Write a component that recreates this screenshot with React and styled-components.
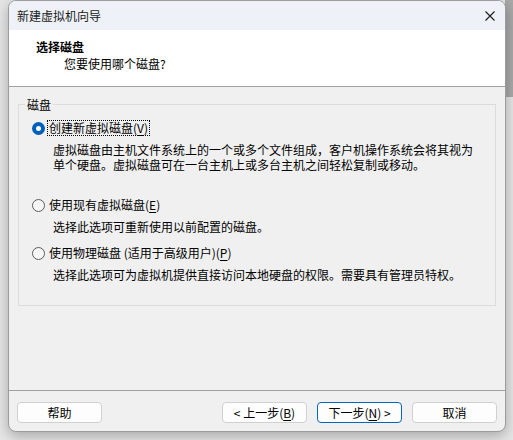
import React from "react";
import styled, { createGlobalStyle } from "styled-components";

const Global = createGlobalStyle`
  html, body { margin: 0; padding: 0; }
  body {
    width: 513px;
    height: 440px;
    overflow: hidden;
    background:
      linear-gradient(#a9a9a9, #a9a9a9) right top / 8px 97px no-repeat,
      #e6e6e6;
    font-family: "Noto Sans CJK SC", "Microsoft YaHei", "Noto Sans", sans-serif;
    font-size: 12px;
    color: #000;
  }
`;

const Window = styled.div`
  box-sizing: border-box;
  margin-left: 8px;
  width: 498px;
  border: 1px solid #9c9c9c;
  border-radius: 8px;
  overflow: hidden;
  background: #f0f0f0;
  box-shadow: 0 4px 14px rgba(0, 0, 0, 0.28);
  display: flex;
  flex-direction: column;
`;

const TitleBar = styled.div`
  height: 29px;
  background: #eef2f8;
  display: flex;
  align-items: center;
  justify-content: space-between;
  padding: 0 10px 0 8px;
`;

const TitleText = styled.span`
  font-size: 12px;
  line-height: 16px;
  color: #1a1a1a;
`;

const CloseBox = styled.span`
  display: flex;
  width: 10px;
  height: 10px;
`;

const Header = styled.div`
  height: 57px;
  box-sizing: border-box;
  background: #ffffff;
  border-bottom: 1px solid #a0a0a0;
  padding: 9px 0 0 27px;
  display: flex;
  flex-direction: column;
`;

const HeaderTitle = styled.div`
  font-weight: bold;
  line-height: 16px;
`;

const HeaderSub = styled.div`
  line-height: 16px;
  margin-top: 1px;
  padding-left: 28px;
`;

const Body = styled.div`
  height: 303px;
  box-sizing: border-box;
  padding-top: 10px;
`;

const Group = styled.fieldset`
  margin: 0 9px;
  padding: 0;
  border: 1px solid #dcdcdc;
  border-radius: 0;
  min-width: 0;
`;

const Legend = styled.legend`
  margin-left: 6px;
  padding: 0 2px;
  line-height: 15px;
`;

const GroupContent = styled.div`
  padding: 8px 0 23px 13px;
  display: flex;
  flex-direction: column;
`;

const Option = styled.div`
  margin-top: ${(p) => p.$top || 0}px;
  display: flex;
  flex-direction: column;
`;

const OptionRow = styled.div`
  display: flex;
  align-items: center;
  height: 16px;
`;

const Radio = styled.span`
  box-sizing: border-box;
  width: 13px;
  height: 13px;
  border-radius: 50%;
  flex: none;
  display: flex;
  align-items: center;
  justify-content: center;
  background: ${(p) => (p.$checked ? "#005fb8" : "#f6f6f6")};
  border: ${(p) => (p.$checked ? "none" : "1px solid #5c5c5c")};
  &::after {
    content: "";
    display: ${(p) => (p.$checked ? "block" : "none")};
    width: 5px;
    height: 5px;
    border-radius: 50%;
    background: #ffffff;
  }
`;

const Label = styled.span`
  margin-left: 2px;
  line-height: 14px;
  padding: 0 1px;
  border: 1px dotted ${(p) => (p.$focus ? "#000" : "transparent")};
  white-space: nowrap;
`;

const Desc = styled.div`
  margin: 6px 0 0 21px;
  line-height: 15px;
  white-space: nowrap;
`;

const Key = styled.span`
  text-decoration: underline;
  text-underline-offset: 2px;
`;

const Separator = styled.div`
  height: 1px;
  background: #a0a0a0;
`;

const Footer = styled.div`
  height: 40px;
  box-sizing: border-box;
  padding: 11px 8px 0 8px;
  display: flex;
  gap: 10px;
`;

const Spacer = styled.div`
  flex: 1;
`;

const Button = styled.button`
  box-sizing: border-box;
  width: 85px;
  height: 21px;
  padding: 0;
  margin: 0;
  background: #fdfdfd;
  border: 1px solid ${(p) => (p.$default ? "#0067c0" : "#d0d0d0")};
  border-radius: 4px;
  font-family: inherit;
  font-size: 12px;
  line-height: 16px;
  color: #000;
  display: flex;
  align-items: center;
  justify-content: center;
`;

export default function App() {
  return (
    <>
      <Global />
      <Window>
        <TitleBar>
          <TitleText>新建虚拟机向导</TitleText>
          <CloseBox>
            <svg width="10" height="10" viewBox="0 0 10 10">
              <path d="M0.5 0.5 L9.5 9.5 M9.5 0.5 L0.5 9.5" stroke="#1a1a1a" strokeWidth="1.1" fill="none" />
            </svg>
          </CloseBox>
        </TitleBar>
        <Header>
          <HeaderTitle>选择磁盘</HeaderTitle>
          <HeaderSub>您要使用哪个磁盘?</HeaderSub>
        </Header>
        <Body>
          <Group>
            <Legend>磁盘</Legend>
            <GroupContent>
              <Option>
                <OptionRow>
                  <Radio $checked />
                  <Label $focus>
                    创建新虚拟磁盘(<Key>V</Key>)
                  </Label>
                </OptionRow>
                <Desc>
                  虚拟磁盘由主机文件系统上的一个或多个文件组成，客户机操作系统会将其视为
                  <br />
                  单个硬盘。虚拟磁盘可在一台主机上或多台主机之间轻松复制或移动。
                </Desc>
              </Option>
              <Option $top={25}>
                <OptionRow>
                  <Radio />
                  <Label>
                    使用现有虚拟磁盘(<Key>E</Key>)
                  </Label>
                </OptionRow>
                <Desc>选择此选项可重新使用以前配置的磁盘。</Desc>
              </Option>
              <Option $top={11}>
                <OptionRow>
                  <Radio />
                  <Label>
                    使用物理磁盘 (适用于高级用户)(<Key>P</Key>)
                  </Label>
                </OptionRow>
                <Desc>选择此选项可为虚拟机提供直接访问本地硬盘的权限。需要具有管理员特权。</Desc>
              </Option>
            </GroupContent>
          </Group>
        </Body>
        <Separator />
        <Footer>
          <Button>帮助</Button>
          <Spacer />
          <Button>
            &lt; 上一步(<Key>B</Key>)
          </Button>
          <Button $default>
            下一步(<Key>N</Key>) &gt;
          </Button>
          <Button>取消</Button>
        </Footer>
      </Window>
    </>
  );
}
